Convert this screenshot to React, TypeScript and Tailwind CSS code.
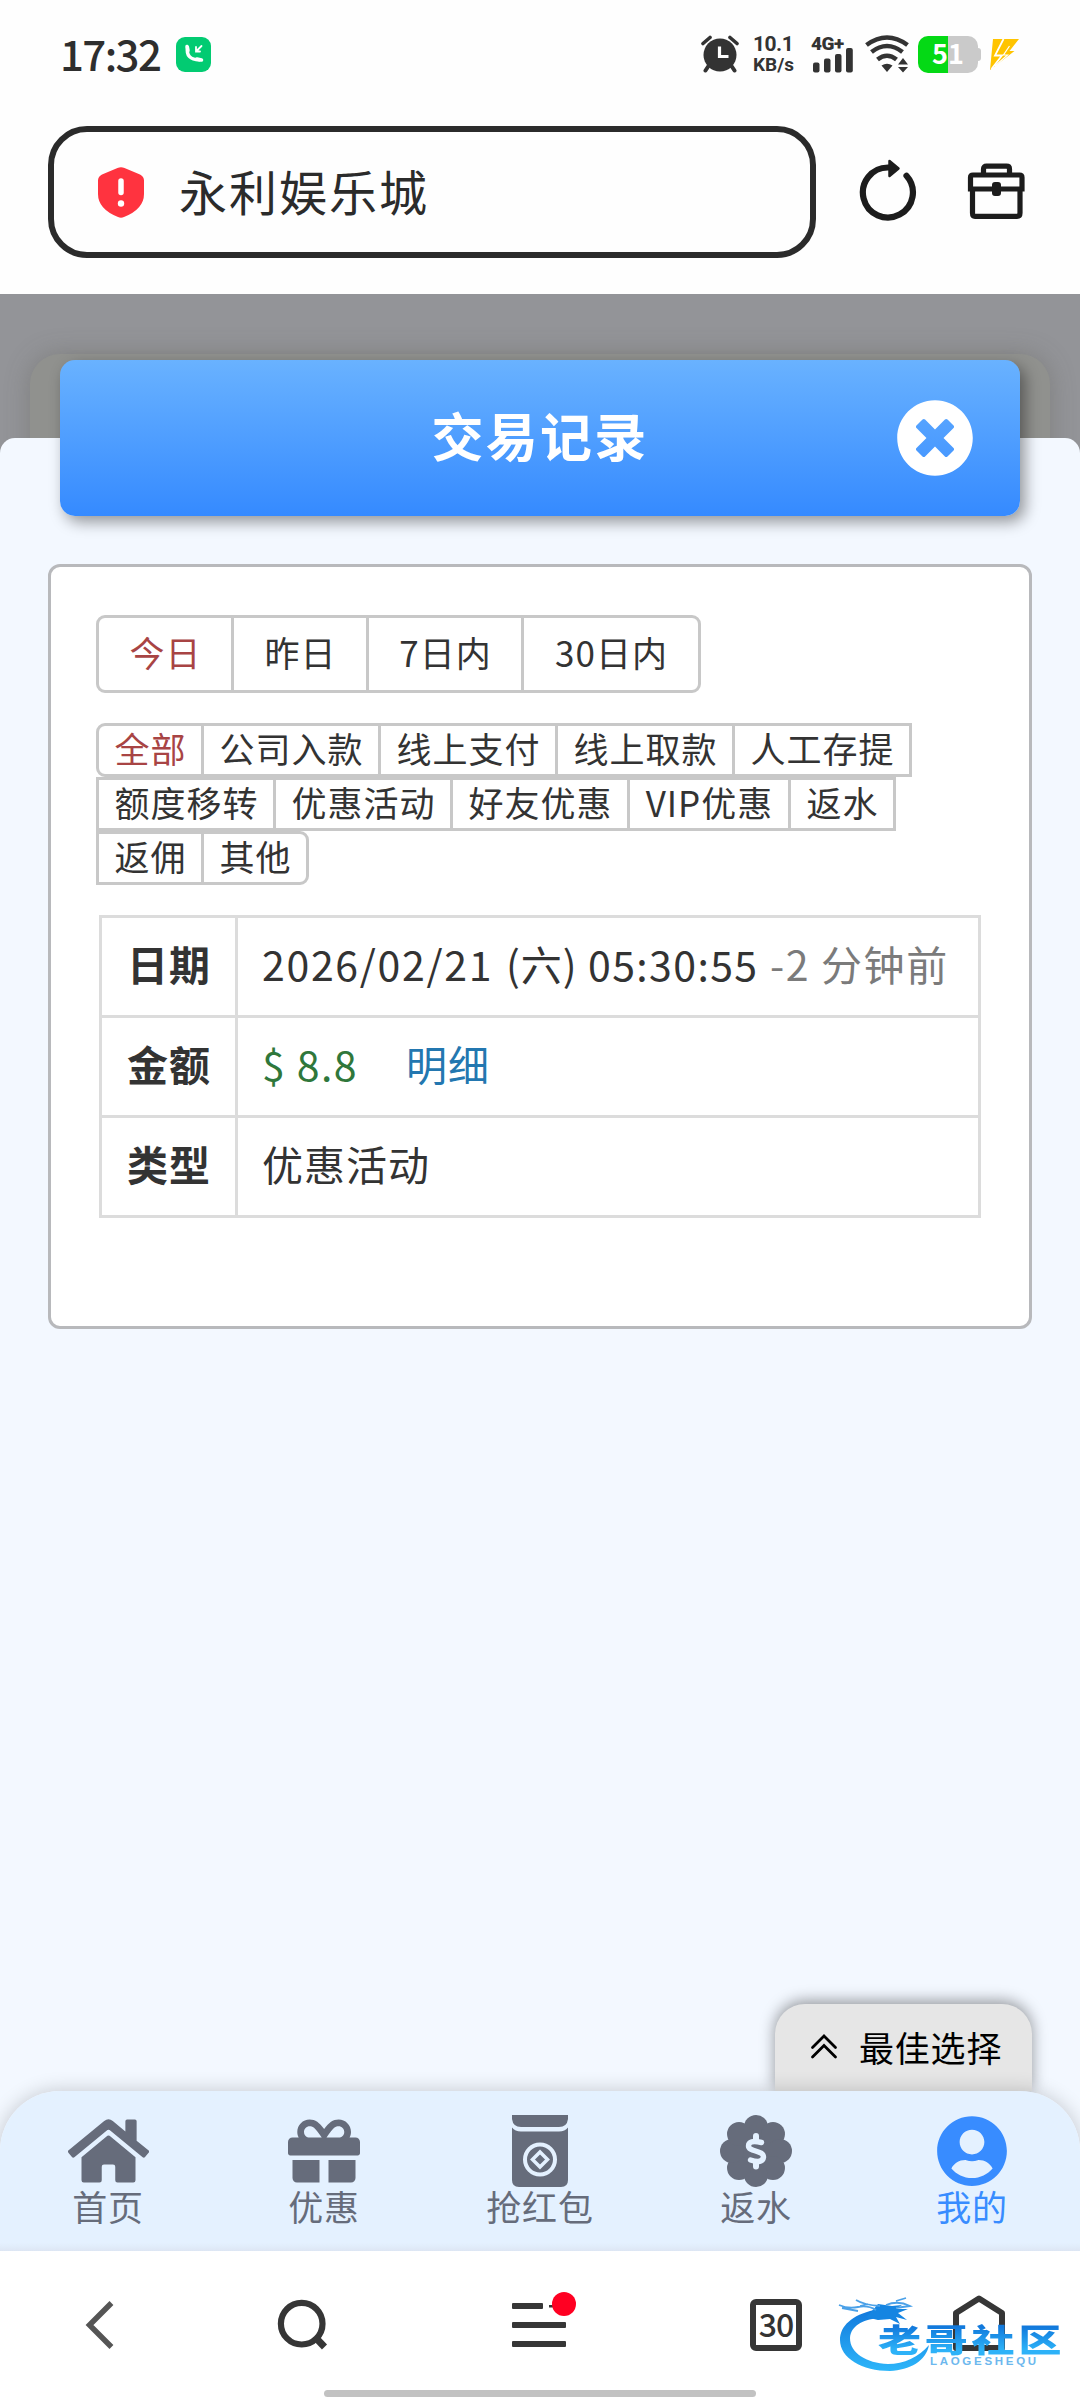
import type { ReactNode } from "react";
import { FaGift, FaHome, FaTimesCircle, FaUserCircle } from "react-icons/fa";

function AlarmIcon() {
  return (
    <svg width="38" height="38" viewBox="0 0 38 38" fill="none">
      <circle cx="19" cy="20" r="16.5" fill="#333" />
      <path d="M2 8.5 9 2.5M36 8.5 29 2.5" stroke="#333" strokeWidth="3.6" strokeLinecap="round" />
      <path d="M7.5 31 4.5 35.5M30.500 31l3 4.500" stroke="#333" strokeWidth="4" strokeLinecap="round" />
      <path d="M18.500 11.500V21.500h9" stroke="#fff" strokeWidth="3.200" />
    </svg>
  );
}

function SignalIcon() {
  return (
    <svg width="42" height="27" viewBox="0 0 42 27" fill="#333">
      <rect x="1" y="16.500" width="6.500" height="10" rx="2" />
      <rect x="12" y="12.500" width="6.500" height="14" rx="2" />
      <rect x="23" y="8" width="6.500" height="18.500" rx="2" />
      <rect x="34" y="2" width="6.800" height="24.500" rx="2" />
    </svg>
  );
}

function WifiIcon() {
  return (
    <svg width="44" height="38" viewBox="0 0 44 38" fill="none">
      <g stroke="#333" strokeWidth="4.600">
        <path d="M1.500 10Q22-5 42.500 10" />
        <path d="M6.500 17Q22 5 37.500 17" />
        <path d="M12.500 24.500Q22 17 31.500 24.500" />
      </g>
      <path d="M16.500 30.500Q22 27 27.500 30.500L22 37z" fill="#333" />
      <path d="M38 23l5 6.500H33zM38 37.500l5-5.500H33z" fill="#333" />
    </svg>
  );
}

function BoltIcon() {
  return (
    <svg width="30" height="31" viewBox="0 0 30 31">
      <path d="M3 0h26L19.500 12h5L0 31z" fill="#ffc400" />
      <path d="M13.500 0 5 16.500h7L1.500 30" fill="none" stroke="#fff" strokeWidth="1.800" />
      <path d="M19.500 7 13.500 16h4L5 27" fill="none" stroke="#fff" strokeWidth="1.200" />
    </svg>
  );
}

function StatusBar() {
  return (
    <div className="flex h-[108px] items-center justify-between px-[60px]">
      <div className="flex items-center">
        <span className="w-[116px] pb-[3px] text-[42px] font-medium leading-[46px] tracking-[-1.600px] text-[#2e2e2e]">17:32</span>
        <span className="flex h-[35px] w-[35px] items-center justify-center rounded-[9px] bg-[#02cb72]">
          <svg width="20" height="20" viewBox="0 0 20 20" fill="none" stroke="#fff" strokeLinecap="round">
            <path d="M3.500 3.500Q1.500 15.500 15.500 16" strokeWidth="3.500" />
            <path d="M3 2.500l1 4M13 15l4.500 1" strokeWidth="3.500" />
            <path d="M17.500 2 12.500 7M12 3v4.500h4" strokeWidth="1.800" />
          </svg>
        </span>
      </div>
      <div className="flex h-[38px] items-center text-[#333]">
        <AlarmIcon />
        <div className="ml-[14px] flex w-[59px] flex-col font-['Roboto',sans-serif] font-bold">
          <span className="text-[21px] leading-[20px] tracking-[-0.500px]">10.1</span>
          <span className="text-[19px] leading-[21px]">KB/s</span>
        </div>
        <div className="relative flex h-[37px] w-[43px] items-end">
          <span className="absolute -left-[1px] -top-[2px] font-['Roboto',sans-serif] text-[19px] font-black leading-[20px] tracking-[-0.500px]">4G+</span>
          <SignalIcon />
        </div>
        <div className="ml-[10px]">
          <WifiIcon />
        </div>
        <div className="ml-[9px] flex items-center">
          <div className="flex h-[37px] w-[60px] items-center justify-center rounded-[10px] bg-[linear-gradient(90deg,#04d915_50%,#cacaca_50%)] pb-[3px] text-[27px] font-bold leading-[30px] text-white">
            51
          </div>
          <span className="h-[13px] w-[3px] rounded-r-[3px] bg-[#cacaca]" />
        </div>
        <div className="ml-[9px]">
          <BoltIcon />
        </div>
      </div>
    </div>
  );
}

function AddressBar() {
  return (
    <div className="flex h-[186px] items-start pl-[48px] pt-[18px]">
      <div className="flex h-[132px] w-[768px] items-center rounded-[39px] border-[6px] border-[#2b2b2b] pl-[44px]">
        <svg width="46" height="51" viewBox="0 0 46 51">
          <path
            d="M19.500 1Q23-.5 26.500 1L42 7.500Q46 9.500 46 13.500V27Q46 42 26 50 23 51.300 20 50 0 42 0 27V13.500Q0 9.500 4 7.500z"
            fill="#ff333f"
          />
          <path d="M23 14v11.500" stroke="#fff" strokeWidth="5.500" strokeLinecap="round" />
          <circle cx="23" cy="36.500" r="3.200" fill="#fff" />
        </svg>
        <span className="ml-[35px] pb-[4px] text-[48px] leading-[60px] tracking-[2px] text-[#2b2b2b]">永利娱乐城</span>
      </div>
      <svg className="ml-[42px] mt-[32px]" width="60" height="66" viewBox="0 0 60 66" fill="none">
        <path d="M32 9.500H30A25 25 0 1 0 48.500 17.800" stroke="#1c1c1c" strokeWidth="6.200" strokeLinecap="round" />
        <path d="M31.500 3 40.500 10.500 31.500 18z" fill="#1c1c1c" stroke="#1c1c1c" strokeWidth="2.500" strokeLinejoin="round" />
      </svg>
      <svg className="ml-[48px] mt-[36px]" width="60" height="60" viewBox="0 0 60 60" fill="none" stroke="#1c1c1c" strokeWidth="5.200">
        <path d="M17.500 12V7Q17.500 4.200 20.500 4.200h20Q43.500 4.200 43.500 7v5" />
        <path d="M4.500 27V15.500Q4.500 13 7 13h46.500Q56 13 56 15.500V27Z" />
        <path d="M6.500 27V51Q6.500 54.300 9 54.300H51Q54 54.300 54 51V27" />
        <rect x="27" y="21" width="7" height="12" rx="2" fill="#1c1c1c" strokeWidth="2" />
      </svg>
    </div>
  );
}

const periods = [
  { label: "今日", w: "w-[138px]" },
  { label: "昨日", w: "w-[138px]" },
  { label: "7日内", w: "w-[158px]" },
  { label: "30日内", w: "w-[180px]" },
];

const kinds = [
  [
    { label: "全部", w: "w-[108px]" },
    { label: "公司入款", w: "w-[180px]" },
    { label: "线上支付", w: "w-[180px]" },
    { label: "线上取款", w: "w-[180px]" },
    { label: "人工存提", w: "w-[180px]" },
  ],
  [
    { label: "额度移转", w: "w-[180px]" },
    { label: "优惠活动", w: "w-[180px]" },
    { label: "好友优惠", w: "w-[180px]" },
    { label: "VIP优惠", w: "w-[164px]" },
    { label: "返水", w: "w-[108px]" },
  ],
  [
    { label: "返佣", w: "w-[108px]" },
    { label: "其他", w: "w-[108px]" },
  ],
];

function Filters() {
  return (
    <div className="text-[35px] leading-[40px] tracking-[1px] text-[#333]">
      <div className="flex h-[78px]">
        {periods.map((p, i) => (
          <div
            key={p.label}
            className={`${p.w} flex items-center justify-center border-[3px] border-[#c8c8c8] pb-[4px] pl-[1px] ${i > 0 ? "-ml-[3px]" : "rounded-l-[9px] text-[#a84444]"} ${i === 3 ? "rounded-r-[9px]" : ""}`}
          >
            {p.label}
          </div>
        ))}
      </div>
      <div className="mt-[30px] flex flex-col">
        {kinds.map((row, r) => (
          <div key={r} className="flex h-[54px]">
            {row.map((k, i) => (
              <div
                key={k.label}
                className={`${k.w} flex items-center justify-center whitespace-nowrap border-[3px] border-[#c8c8c8] pb-[4px] pl-[1px] ${i > 0 ? "-ml-[3px]" : ""} ${r === 0 && i === 0 ? "rounded-l-[9px] text-[#a84444]" : ""} ${r === 2 && i === 1 ? "rounded-r-[9px]" : ""}`}
              >
                {k.label}
              </div>
            ))}
          </div>
        ))}
      </div>
    </div>
  );
}

function Row({ head, children }: { head: string; children: ReactNode }) {
  return (
    <div className="-mb-[3px] flex h-[103px] border-[3px] border-[#dcdcdc]">
      <div className="flex w-[136px] items-center justify-center border-r-[3px] border-[#dcdcdc] pb-[7px] pl-[1px] font-bold">{head}</div>
      <div className="flex flex-1 items-center whitespace-pre pb-[7px] pl-[24px]">{children}</div>
    </div>
  );
}

function RecordTable() {
  return (
    <div className="ml-[3px] mt-[30px] w-[882px] text-[41px] leading-[50px] tracking-[1px] text-[#333]">
      <Row head="日期">
        <span className="w-[244px] tracking-[1.700px]">2026/02/21</span>
        <span className="w-[82px]">(六)</span>
        <span className="w-[182px] tracking-[1.400px]">05:30:55</span>
        <span className="tracking-[1.600px] text-[#7b7b7b]">-2 分钟前</span>
      </Row>
      <Row head="金额">
        <span className="w-[144px] tracking-[1.400px] text-[#2f773b]">$ 8.8</span>
        <span className="text-[#2377b0]">明细</span>
      </Row>
      <Row head="类型">优惠活动</Row>
    </div>
  );
}

function PacketIcon() {
  return (
    <svg width="56" height="72" viewBox="0 0 56 72">
      <path d="M0 0h56v4Q55 12 47 12H9Q1 12 0 4z" fill="#666c7b" />
      <path d="M0 12.500Q3 16.500 9 16.500H47Q53 16.500 56 12.500V65Q56 72 49 72H7Q0 72 0 65z" fill="#666c7b" />
      <circle cx="28" cy="44.500" r="15" fill="none" stroke="#e4f1ff" strokeWidth="4" />
      <path d="M28 37 35.500 44.500 28 52 20.500 44.500z" fill="none" stroke="#e4f1ff" strokeWidth="3.500" />
    </svg>
  );
}

function RebateIcon() {
  const lobes = [0, 45, 90, 135, 180, 225, 270, 315];
  return (
    <svg width="72" height="72" viewBox="0 0 72 72">
      <g fill="#666c7b">
        <circle cx="36" cy="36" r="27" />
        {lobes.map((a) => (
          <circle key={a} cx="36" cy="12" r="12" transform={`rotate(${a} 36 36)`} />
        ))}
      </g>
      <g fill="none" stroke="#e4f1ff" strokeLinecap="round">
        <path d="M41.500 27.500Q28.500 24.500 28.500 31C28.500 37 43.500 35 43.500 42Q42.500 49 30.500 45" strokeWidth="5.400" />
        <path d="M36 21v5M36 47v4.500" strokeWidth="6" />
      </g>
    </svg>
  );
}

function TabBar() {
  const tabs = [
    { label: "首页", icon: <FaHome style={{ width: 81, height: 72 }} />, tone: "text-[#666c7b]" },
    { label: "优惠", icon: <FaGift style={{ width: 72, height: 72 }} />, tone: "text-[#666c7b]" },
    { label: "抢红包", icon: <PacketIcon />, tone: "text-[#666c7b]" },
    { label: "返水", icon: <RebateIcon />, tone: "text-[#666c7b]" },
    { label: "我的", icon: <FaUserCircle style={{ width: 70, height: 72 }} />, tone: "text-[#388cff]" },
  ];
  return (
    <nav className="relative grid h-[160px] grid-cols-5 rounded-t-[60px] bg-[linear-gradient(180deg,#e4f1ff_95%,#dde6f4)] pt-[24px] shadow-[0_0_20px_rgba(0,0,0,0.2)]">
      {tabs.map((t) => (
        <div key={t.label} className={`flex flex-col items-center ${t.tone}`}>
          {t.icon}
          <span className="-mt-[1px] text-[35px] leading-[40px] tracking-[0.800px]">{t.label}</span>
        </div>
      ))}
    </nav>
  );
}

function Watermark() {
  return (
    <div className="absolute left-[836px] top-[44px] h-[90px] w-[230px]">
      <svg className="absolute left-0 top-0" width="110" height="84" viewBox="0 0 110 84">
        <defs>
          <linearGradient id="wave" x1="0" y1="0" x2="0" y2="1">
            <stop offset="0" stopColor="#1279dc" />
            <stop offset="1" stopColor="#2db6fa" />
          </linearGradient>
        </defs>
        <path d="M38 15C16 20 4 31 4 45 4 63 26 76 54 76 74 75 90 66 93 50 83 62 68 69 52 69 30 68 14 58 14 43 15 31 26 25 42 23z" fill="url(#wave)" />
        <path d="M36 16 42 9 56 11 66 10 60 14 72 14 62 18 71 25 60 22 64 29 54 24 42 25 30 22z" fill="#1585e2" />
        <path
          d="M20 5Q28 10 44 11M3 10Q12 14 22 12T40 15M6 13 22 16M24 11 32 9M50 10Q62 5 74 11 66 12 60 13M60 6 70 3"
          stroke="#4ba1e8"
          strokeWidth="1.800"
          fill="none"
        />
      </svg>
      <div className="absolute left-[42px] top-[24px] origin-top-left scale-y-[0.740] whitespace-nowrap bg-[linear-gradient(180deg,#1279dc_20%,#2db2f8_80%)] bg-clip-text text-[43px] font-black leading-[52px] tracking-[3.800px] text-transparent">
        老哥社区
      </div>
      <div className="absolute left-[94px] top-[59px] whitespace-nowrap font-['Liberation_Sans',sans-serif] text-[11.500px] font-bold leading-[14px] tracking-[2.700px] text-[#6db8ee]">
        LAOGESHEQU
      </div>
    </div>
  );
}

function BrowserBar() {
  return (
    <div className="relative h-[149px] bg-white">
      <div className="flex h-[139px] items-start pt-[40px]">
        <svg className="ml-[80px]" width="40" height="66" viewBox="0 0 40 66" fill="none">
          <path d="M29.500 14 9.500 34l20 20" stroke="#555" strokeWidth="5.500" strokeLinecap="square" />
        </svg>
        <svg className="ml-[154px]" width="60" height="66" viewBox="0 0 60 66" fill="none" stroke="#363636">
          <circle cx="27.700" cy="32.700" r="20.800" strokeWidth="6.200" />
          <path d="M41.500 46.500 50.500 56" strokeWidth="7" />
        </svg>
        <svg className="ml-[178px]" width="66" height="66" viewBox="0 0 66 66">
          <g fill="#363636">
            <rect x="0" y="12" width="31" height="6" rx="1" />
            <rect x="37" y="14" width="8" height="2.500" />
            <rect x="0" y="31" width="54" height="6" rx="1" />
            <rect x="0" y="50" width="54" height="6" rx="1" />
          </g>
          <circle cx="52" cy="13" r="12" fill="#ff0022" />
        </svg>
        <div className="ml-[172px] mt-[8px] flex h-[52px] w-[52px] items-center justify-center rounded-[6px] border-[6px] border-[#363636] pb-[5px] text-[32px] font-medium leading-[36px] tracking-[-1px] text-[#333]">
          30
        </div>
        <svg className="ml-[149px]" width="56" height="66" viewBox="0 0 56 66" fill="none" stroke="#363636" strokeWidth="6" strokeLinejoin="round">
          <path d="M5 57V22L28 7.500 51 22V57Z" />
        </svg>
      </div>
      <div className="mx-auto h-[7px] w-[432px] rounded-full bg-[#c2c2c2]" />
      <Watermark />
    </div>
  );
}

export default function App() {
  return (
    <div className="flex h-[2400px] w-[1080px] flex-col overflow-hidden bg-[#fefefe] font-['Noto_Sans_CJK_SC',sans-serif] text-[#2b2b2b]">
      <StatusBar />
      <AddressBar />
      <main className="relative flex h-[1957px] flex-col overflow-hidden bg-[#939498]">
        <div className="absolute left-[30px] top-[60px] h-[200px] w-[1020px] rounded-[30px] bg-[#90918e] shadow-[0_0_24px_rgba(90,90,80,0.35)]" />
        <section className="relative mt-[144px] flex flex-1 flex-col rounded-t-[15px] bg-[#f3f8ff]">
          <header className="relative mx-[60px] -mt-[78px] flex h-[156px] shrink-0 items-center justify-center rounded-[15px] bg-[linear-gradient(180deg,#69b2ff,#358aff)] shadow-[5px_6px_15px_rgba(0,0,0,0.4)]">
            <h1 className="pb-[6px] text-[52px] font-bold leading-[60px] tracking-[2.200px] text-white">交易记录</h1>
            <FaTimesCircle className="absolute right-[46px] top-[39px] h-[78px] w-[78px] text-white" />
          </header>
          <div className="mx-[48px] mt-[48px] h-[765px] rounded-[12px] border-[3px] border-[#b8b9bc] bg-white pl-[45px] pt-[48px]">
            <Filters />
            <RecordTable />
          </div>
          <div className="ml-[775px] mt-auto flex h-[87px] w-[257px] items-start rounded-t-[30px] bg-[#e6e6e6] pl-[35px] pt-[23px] text-black shadow-[0_-3px_15px_rgba(0,0,0,0.4)]">
            <svg className="mt-[5px]" width="28" height="28" viewBox="0 0 28 28" fill="none" stroke="#000" strokeWidth="2.800" strokeLinecap="round">
              <path d="M2.500 15.500 14 4l11.500 11.500M2.500 25 14 13.500 25.500 25" />
            </svg>
            <span className="ml-[21px] text-[35px] leading-[40px] tracking-[0.800px]">最佳选择</span>
          </div>
          <TabBar />
        </section>
      </main>
      <BrowserBar />
    </div>
  );
}
